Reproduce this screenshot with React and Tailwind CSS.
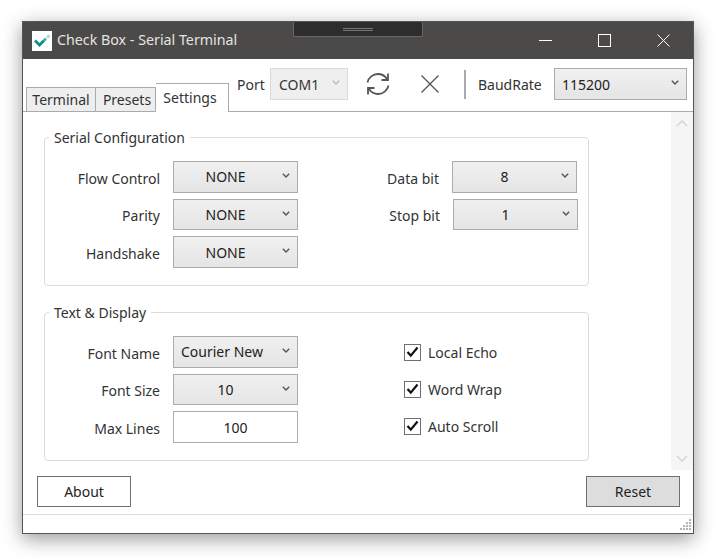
// Serial terminal settings window
import React from 'react';

const FONT = "font-['Noto_Sans','Open_Sans',sans-serif]";

function Chevron({ className = 'text-[#555]' }) {
  return (
    <svg className={className} width="8" height="5" viewBox="0 0 8 5" fill="none" stroke="currentColor" strokeWidth="1.4">
      <path d="M0.8 0.8L4 4L7.2 0.8" />
    </svg>
  );
}

function Combo({ value, width = 'w-[125px]', height = 'h-[32px]', center = true, low = false }) {
  return (
    <div className={`relative flex items-center shrink-0 ${width} ${height} border border-[#acacac] bg-gradient-to-b from-[#f0f0f0] to-[#e5e5e5]`}>
      <span className={`${center ? 'w-[103px] text-center' : 'pl-[7px]'} ${low ? 'pt-[2px]' : ''} text-[#222]`}>{value}</span>
      <span className="absolute right-[7px] top-[11px] leading-none"><Chevron /></span>
    </div>
  );
}

function Row({ label, labelWidth = 'w-[115px]', height = 'h-[32px]', children, extra = '' }) {
  return (
    <div className={`flex items-center gap-[13px] ${height} ${extra}`}>
      <span className={`${labelWidth} ${height === 'h-[31px]' ? 'pt-[2px]' : 'pt-[4px]'} text-right text-[#333]`}>{label}</span>
      {children}
    </div>
  );
}

function Check({ label }) {
  return (
    <div className="flex items-center gap-[7px] h-[32px]">
      <div className="flex items-center justify-center w-[17px] h-[17px] border border-[#707070] bg-white">
        <svg width="13" height="12" viewBox="0 0 13 12" fill="none" stroke="#111" strokeWidth="2.2">
          <path d="M1.5 6l3.3 3.6L11.5 1.5" />
        </svg>
      </div>
      <span className="pt-[2px] text-[#333]">{label}</span>
    </div>
  );
}

function Group({ title, children, extra = '' }) {
  return (
    <div className={`relative flex w-[545px] h-[149px] pt-[23px] border border-[#dcdcdc] rounded-[4px] ${extra}`}>
      <span className="absolute left-[4px] top-[-10px] bg-white px-[5px] leading-[20px] text-[#333] whitespace-nowrap">{title}</span>
      {children}
    </div>
  );
}

function SyncIcon() {
  return (
    <svg width="26" height="26" viewBox="0 0 26 26" fill="none" stroke="#555" strokeWidth="1.8">
      <path d="M2.5 11.5C3.5 6.5 8 3 13 3C17 3 20 5 22 8" />
      <path d="M23.5 14.5C22.5 19.5 18 23 13 23C9 23 6 21 4 18" />
      <path d="M23 2.5V9H16.5" />
      <path d="M3 23.5V17H9.5" />
    </svg>
  );
}

function Logo() {
  return (
    <div className="flex items-center justify-center w-[20px] h-[20px] bg-white">
      <svg width="18" height="14" viewBox="0 0 18 14" fill="none" strokeWidth="2.8">
        <path d="M2 6.5L6.5 11L11 6.5" stroke="#128a80" />
        <path d="M11 6.5L13 4.5" stroke="#4fae98" />
        <path d="M14 3.5L16.5 1.5" stroke="#a5d8c6" />
      </svg>
    </div>
  );
}

export default function App() {
  return (
    <div className={`w-[717px] h-[557px] bg-white pt-[21px] pl-[22px] overflow-hidden text-[14px] leading-none ${FONT}`}>
      <div className="relative flex flex-col w-[672px] h-[513px] border border-[#555] bg-white shadow-[0_5px_18px_rgba(0,0,0,0.4)]">
        {/* Title bar */}
        <div className="flex items-center h-[37px] bg-[#4b4a48] shrink-0">
          <div className="ml-[9px] mr-[5px]"><Logo /></div>
          <span className="text-[#e4e4e4] text-[14.25px]">Check Box - Serial Terminal</span>
          <div className="ml-auto flex items-center h-full text-white">
            <div className="flex items-center justify-center w-[59px] h-full">
              <svg width="13" height="13" viewBox="0 0 13 13" stroke="#fff" strokeWidth="1"><path d="M0 6.5H13" /></svg>
            </div>
            <div className="flex items-center justify-center w-[59px] h-full">
              <svg width="13" height="13" viewBox="0 0 13 13" fill="none" stroke="#fff" strokeWidth="1"><rect x="0.5" y="0.5" width="12" height="12" /></svg>
            </div>
            <div className="flex items-center justify-center w-[59px] h-full">
              <svg width="13" height="13" viewBox="0 0 13 13" stroke="#fff" strokeWidth="1"><path d="M0.5 0.5L12.5 12.5M12.5 0.5L0.5 12.5" /></svg>
            </div>
          </div>
        </div>

        {/* Notch from the capture toolbar */}
        <div className="absolute left-[270px] top-0 flex items-center justify-center w-[130px] h-[15px] bg-[#2d2d30] border-b border-x border-[#666]">
          <div className="w-[30px] h-[3px] border-y border-[#777]" />
        </div>

        {/* Toolbar with tabs */}
        <div className="flex items-start h-[53px] shrink-0 border-b border-[#aaa]">
          <div className="flex items-end self-end ml-[3px] -mb-[1px] h-[29px] relative z-10">
            <div className="flex items-center justify-center w-[70px] h-[24px] mb-[1px] bg-[#eeeeee] border border-[#aaa] border-b-0 text-[#333]">Terminal</div>
            <div className="flex items-center justify-center w-[60px] h-[24px] mb-[1px] pl-[3px] bg-[#eeeeee] border border-[#aaa] border-l-0 border-b-0 text-[#333]">Presets</div>
            <div className="flex items-center justify-center w-[73px] h-[29px] pb-[1px] pr-[4px] bg-white border border-[#aaa] border-b-0 border-l-0 text-[#333]">Settings</div>
          </div>
          <div className="flex items-center h-[32px] mt-[9px] ml-[8px]">
            <span className="w-[33px] pt-[2px] text-[#333]">Port</span>
            <div className="relative flex items-center w-[78px] h-[32px] pl-[8px] pt-[2px] border border-[#d9d9d9] bg-[#efefef] text-[#333]">
              COM1
              <span className="absolute right-[7px] top-[11px] leading-none"><Chevron className="text-[#bbb]" /></span>
            </div>
            <div className="flex items-center justify-center w-[60px]"><SyncIcon /></div>
            <div className="flex items-center justify-center w-[44px]">
              <svg width="20" height="20" viewBox="0 0 20 20" stroke="#555" strokeWidth="1.3"><path d="M1.5 1.5L18.5 18.5M18.5 1.5L1.5 18.5" /></svg>
            </div>
            <div className="w-[2px] h-[29px] ml-[12px] bg-[#aaa]" />
            <span className="w-[76px] ml-[12px] pt-[2px] text-[#333]">BaudRate</span>
            <Combo value="115200" width="w-[133px]" center={false} low />
          </div>
        </div>

        {/* Settings page */}
        <div className="flex h-[358px] shrink-0">
          <div className="flex flex-col flex-1 pl-[21px] pt-[25px]">
            <Group title="Serial Configuration">
              <div className="flex flex-col">
                <Row label="Flow Control"><Combo value="NONE" /></Row>
                <Row label="Parity" height="h-[31px]" extra="mt-[6px]"><Combo value="NONE" height="h-[31px]" /></Row>
                <Row label="Handshake" extra="mt-[6px]"><Combo value="NONE" low /></Row>
              </div>
              <div className="flex flex-col ml-[54px]">
                <Row label="Data bit" labelWidth="w-[87px]"><Combo value="8" /></Row>
                <Row label="Stop bit" labelWidth="w-[88px]" height="h-[31px]" extra="mt-[6px]"><Combo value="1" height="h-[31px]" /></Row>
              </div>
            </Group>
            <Group title="Text & Display" extra="mt-[26px]">
              <div className="flex flex-col">
                <Row label="Font Name"><Combo value="Courier New" center={false} /></Row>
                <Row label="Font Size" height="h-[31px]" extra="mt-[6px]"><Combo value="10" height="h-[31px]" /></Row>
                <Row label="Max Lines" extra="mt-[6px]">
                  <div className="flex items-center justify-center w-[125px] h-[32px] pt-[2px] border border-[#acacac] bg-white text-[#222]">100</div>
                </Row>
              </div>
              <div className="flex flex-col ml-[106px] gap-[5px]">
                <Check label="Local Echo" />
                <Check label="Word Wrap" />
                <Check label="Auto Scroll" />
              </div>
            </Group>
          </div>
          <div className="flex flex-col items-center justify-between w-[22px] h-full py-[8px] bg-[#f5f5f5] shrink-0">
            <svg width="12" height="7" viewBox="0 0 12 7" fill="none" stroke="#d4d4d4" strokeWidth="1.5"><path d="M1 6l5-5 5 5" /></svg>
            <svg width="12" height="7" viewBox="0 0 12 7" fill="none" stroke="#d4d4d4" strokeWidth="1.5"><path d="M1 1l5 5 5-5" /></svg>
          </div>
        </div>

        {/* Bottom buttons */}
        <div className="flex justify-between flex-1 pt-[6px] pl-[14px] pr-[13px]">
          <button className="w-[94px] h-[31px] border border-[#707070] bg-white text-[#222]">About</button>
          <button className="w-[94px] h-[31px] border border-[#707070] bg-[#dddddd] text-[#222]">Reset</button>
        </div>

        {/* Status bar */}
        <div className="relative h-[19px] shrink-0 border-t border-[#dcdcdc]">
          <svg className="absolute right-[1px] bottom-[1px]" width="14" height="14" viewBox="0 0 14 14" fill="#b5b5b5">
            <rect x="11" y="1" width="2" height="2" /><rect x="11" y="4" width="2" height="2" /><rect x="8" y="4" width="2" height="2" />
            <rect x="11" y="7" width="2" height="2" /><rect x="8" y="7" width="2" height="2" /><rect x="5" y="7" width="2" height="2" />
            <rect x="11" y="10" width="2" height="2" /><rect x="8" y="10" width="2" height="2" /><rect x="5" y="10" width="2" height="2" /><rect x="2" y="10" width="2" height="2" />
          </svg>
        </div>
      </div>
    </div>
  );
}
